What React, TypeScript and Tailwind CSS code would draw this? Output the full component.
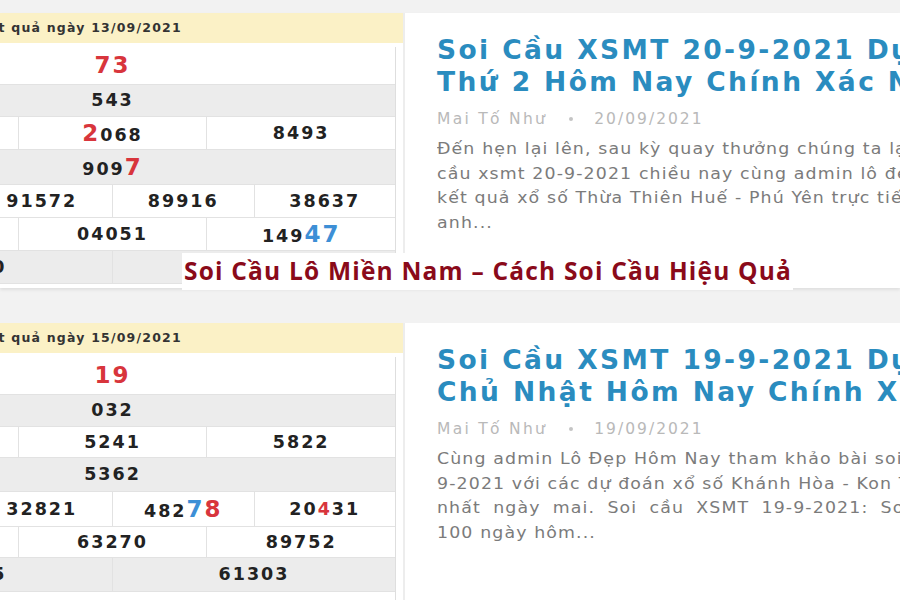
import React from "react";

type Part = { t: string; c?: "red" | "blue"; big?: boolean };
type Cell = Part[];
type Row = { cells: Cell[]; gray?: boolean; h: string };

const n = (t: string): Part[] => [{ t }];

const table1: Row[] = [
  { cells: [[{ t: "73", c: "red", big: true }]], h: "h-[38px]" },
  { cells: [n("543")], gray: true, h: "h-[32px]" },
  { cells: [n("1592"), [{ t: "2", c: "red", big: true }, { t: "068" }], n("8493")], h: "h-[33px]" },
  { cells: [[{ t: "909" }, { t: "7", c: "red", big: true }]], gray: true, h: "h-[35px]" },
  { cells: [n("56201"), n("91572"), n("89916"), n("38637")], h: "h-[33px]" },
  { cells: [n("27820"), n("04051"), [{ t: "149" }, { t: "47", c: "blue", big: true }]], h: "h-[33px]" },
  { cells: [n("62180"), n("49530")], gray: true, h: "h-[33px]" },
];

const table2: Row[] = [
  { cells: [[{ t: "19", c: "red", big: true }]], h: "h-[38px]" },
  { cells: [n("032")], gray: true, h: "h-[32px]" },
  { cells: [n("7310"), n("5241"), n("5822")], h: "h-[31px]" },
  { cells: [n("5362")], gray: true, h: "h-[34px]" },
  {
    cells: [
      n("15067"),
      n("32821"),
      [{ t: "482" }, { t: "7", c: "blue", big: true }, { t: "8", c: "red", big: true }],
      [{ t: "20" }, { t: "4", c: "red" }, { t: "31" }],
    ],
    h: "h-[35px]",
  },
  { cells: [n("11946"), n("63270"), n("89752")], h: "h-[31px]" },
  { cells: [n("30485"), n("61303")], gray: true, h: "h-[34px]" },
  { cells: [n("36440")], h: "h-[33px]" },
];

function Digits({ parts }: { parts: Part[] }) {
  return (
    <span className="whitespace-nowrap">
      {parts.map((p, i) => (
        <span
          key={i}
          className={
            (p.c === "red" ? "text-[#d8353c] " : p.c === "blue" ? "text-[#3d8fd6] " : "text-[#222] ") +
            (p.big ? "text-[23px]" : "text-[17.5px]")
          }
        >
          {p.t}
        </span>
      ))}
    </span>
  );
}

function ResultTable({ date, rows }: { date: string; rows: Row[] }) {
  return (
    <div className="w-[403px] shrink-0 bg-white overflow-hidden [font-family:'DejaVu_Sans',sans-serif]">
      <div className="h-[30px] bg-[#fbf1c6] flex items-center overflow-hidden">
        <span className="-ml-[22px] whitespace-nowrap text-[12.5px] font-bold text-[#333] tracking-[1.2px]">
          Kết quả ngày {date}
        </span>
      </div>
      <div className="mt-[4px] -ml-[170px] w-[566px] border-r border-[#dedede] font-bold tracking-[2px]">
        {rows.map((r, i) => (
          <div
            key={i}
            className={`flex border-b border-[#e2e2e2] ${r.h} ${r.gray ? "bg-[#ececec]" : "bg-white"}`}
          >
            {r.cells.map((c, j) => (
              <div
                key={j}
                className={`flex-1 flex items-center justify-center ${j > 0 ? "border-l border-[#e2e2e2]" : ""}`}
              >
                <Digits parts={c} />
              </div>
            ))}
          </div>
        ))}
      </div>
    </div>
  );
}

function Post({
  title,
  date,
  body,
  spread,
}: {
  title: string[];
  date: string;
  body: string[];
  spread?: number;
}) {
  return (
    <div className="flex-1 min-w-0 bg-white border-l-2 border-[#ededed] pl-[32px] pt-[21px] overflow-hidden [font-family:'DejaVu_Sans',sans-serif]">
      <div className="text-[26.5px] leading-[32px] font-bold text-[#2a8cbf] tracking-[2.4px]">
        {title.map((l, i) => (
          <div key={i} className="whitespace-nowrap">
            {l}
          </div>
        ))}
      </div>
      <div className="mt-[11px] flex items-center text-[15.5px] leading-[20px] text-[#b9b9b9] whitespace-nowrap">
        <span className="tracking-[2.3px]">Mai Tố Như</span>
        <span className="ml-[22px] mr-[21px] w-[4px] h-[4px] rounded-full bg-[#c4c4c4]" />
        <span className="tracking-[2px]">{date}</span>
      </div>
      <div className="mt-[8px] text-[15.5px] leading-[24.5px] text-[#7b7b7b] tracking-[1px] origin-top-left scale-x-[1.12]">
        {body.map((l, i) => (
          <div key={i} className={`whitespace-nowrap ${i === spread ? "[word-spacing:5px]" : ""}`}>
            {l}
          </div>
        ))}
      </div>
    </div>
  );
}

export default function App() {
  return (
    <div className="relative w-[900px] h-[600px] overflow-hidden bg-[#f2f2f2]">
      <div className="pt-[13px] flex flex-col gap-[35px]">
        <div className="flex h-[275px] shadow-[0_2px_3px_rgba(0,0,0,0.08)]">
          <ResultTable date="13/09/2021" rows={table1} />
          <Post
            title={["Soi Cầu XSMT 20-9-2021 Dự Đoán XSMT", "Thứ 2 Hôm Nay Chính Xác Nhất"]}
            date="20/09/2021"
            body={[
              "Đến hẹn lại lên, sau kỳ quay thưởng chúng ta lại cùng soi",
              "cầu xsmt 20-9-2021 chiều nay cùng admin lô đẹp hôm nay",
              "kết quả xổ số Thừa Thiên Huế - Phú Yên trực tiếp",
              "anh...",
            ]}
          />
        </div>
        <div className="flex h-[290px]">
          <ResultTable date="15/09/2021" rows={table2} />
          <Post
            title={["Soi Cầu XSMT 19-9-2021 Dự Đoán XSMT", "Chủ Nhật Hôm Nay Chính Xác Nhất"]}
            date="19/09/2021"
            spread={2}
            body={[
              "Cùng admin Lô Đẹp Hôm Nay tham khảo bài soi cầu XSMT 19-",
              "9-2021 với các dự đoán xổ số Khánh Hòa - Kon Tum",
              "nhất ngày mai. Soi cầu XSMT 19-9-2021: Soi",
              "100 ngày hôm...",
            ]}
          />
        </div>
      </div>
      <div className="absolute left-[182px] top-[253px] h-[37px] w-[611px] bg-white flex items-center pl-[2px]">
        <span className="whitespace-nowrap text-[24.5px] font-bold tracking-[1.2px] text-[#8a0a1a] [font-family:'Open_Sans',sans-serif]">
          Soi Cầu Lô Miền Nam – Cách Soi Cầu Hiệu Quả
        </span>
      </div>
    </div>
  );
}
